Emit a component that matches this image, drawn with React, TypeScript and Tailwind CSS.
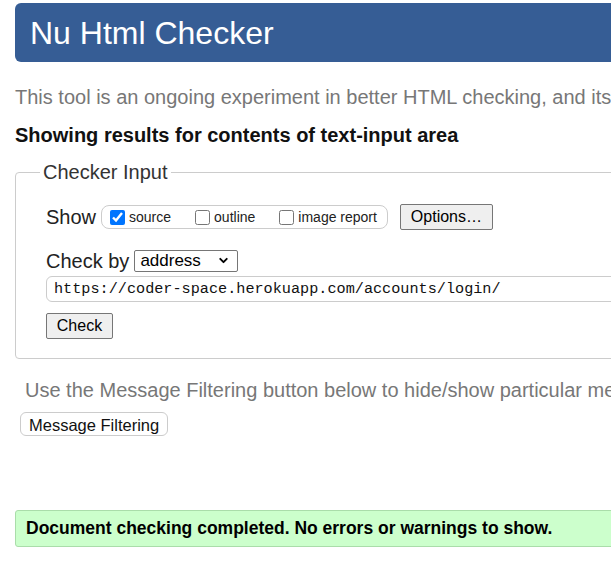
import { ChevronDown } from 'lucide-react';

const sans = 'font-["Liberation_Sans",Arial,sans-serif]';

function ShowOption({ label, checked }: { label: string; checked?: boolean }) {
  return (
    <label className="flex items-center gap-[4px] text-[14px] text-[#222]">
      <input
        type="checkbox"
        defaultChecked={checked}
        className="m-0 h-[15px] w-[15px] accent-[#0075ff]"
      />
      {label}
    </label>
  );
}

export default function App() {
  return (
    <div className={`${sans} w-[611px] h-[562px] overflow-hidden bg-white`}>
      <div className="w-[900px] pl-[15px] pt-[3px]">
        {/* header */}
        <div className="h-[59px] bg-[#365d95] rounded-[6px] pl-[15px] flex items-center">
          <h1 className="text-[32px] leading-none text-white">Nu Html Checker</h1>
        </div>

        <p className="mt-[24px] text-[20px] leading-[22px] text-[#777] whitespace-nowrap">
          This tool is an ongoing experiment in better HTML checking, and its behavior remains subject to change
        </p>

        <h2 className="mt-[15px] text-[20px] leading-[24px] font-bold text-[#111] whitespace-nowrap">
          Showing results for contents of text-input area
        </h2>

        {/* checker input */}
        <fieldset className="mt-[13px] border border-[#ccc] rounded-[4px] pb-[19px]">
          <legend className="ml-[24px] px-[3px] text-[20px] leading-[24px] text-[#333]">
            Checker Input
          </legend>

          <div className="pl-[30px]">
            <div className="mt-[20px] h-[26px] flex items-center">
              <span className="text-[20px] text-[#222] mr-[5px]">Show</span>
              <div className="h-[24px] flex items-center gap-[24px] border border-[#ccc] rounded-[8px] pl-[8px] pr-[10px]">
                <ShowOption label="source" checked />
                <ShowOption label="outline" />
                <ShowOption label="image report" />
              </div>
              <button className="ml-[12px] h-[26px] w-[93px] bg-[#efefef] border border-[#767676] rounded-[2px] text-[16px] text-black">
                Options…
              </button>
            </div>

            <div className="mt-[20px] h-[22px] flex items-center">
              <span className="text-[20px] text-[#222] mr-[5px]">Check by</span>
              <div className="relative">
                <select className="appearance-none h-[22px] w-[104px] border border-[#767676] rounded-[2px] pl-[5px] text-[17px] leading-none text-black">
                  <option>address</option>
                </select>
                <ChevronDown className="absolute right-[8px] top-[5px] h-[13px] w-[13px] pointer-events-none" strokeWidth={3.5} />
              </div>
            </div>

            <input
              readOnly
              value="https://coder-space.herokuapp.com/accounts/login/"
              className='mt-[4px] block h-[26px] w-[840px] border border-[#ccc] rounded-[6px] px-[7px] font-["Liberation_Mono",monospace] text-[15.2px] text-[#111]'
            />

            <button className="mt-[11px] block h-[26px] w-[67px] bg-[#efefef] border border-[#767676] rounded-[2px] text-[16px] text-black">
              Check
            </button>
          </div>
        </fieldset>

        <p className="mt-[20px] ml-[10px] text-[20px] leading-[22px] text-[#777] whitespace-nowrap">
          Use the Message Filtering button below to hide/show particular messages, and to see total counts of errors and warnings.
        </p>

        <button className="mt-[11px] ml-[5px] block h-[24px] px-[8px] bg-white border border-[#ccc] rounded-[6px] text-[16.5px] text-[#111]">
          Message Filtering
        </button>

        <div className="mt-[74px] h-[37px] flex items-center pl-[10px] bg-[#ccffcc] border border-[#aaddaa] rounded-[3px]">
          <p className="text-[17.5px] font-bold text-black whitespace-nowrap">
            Document checking completed. No errors or warnings to show.
          </p>
        </div>
      </div>
    </div>
  );
}
